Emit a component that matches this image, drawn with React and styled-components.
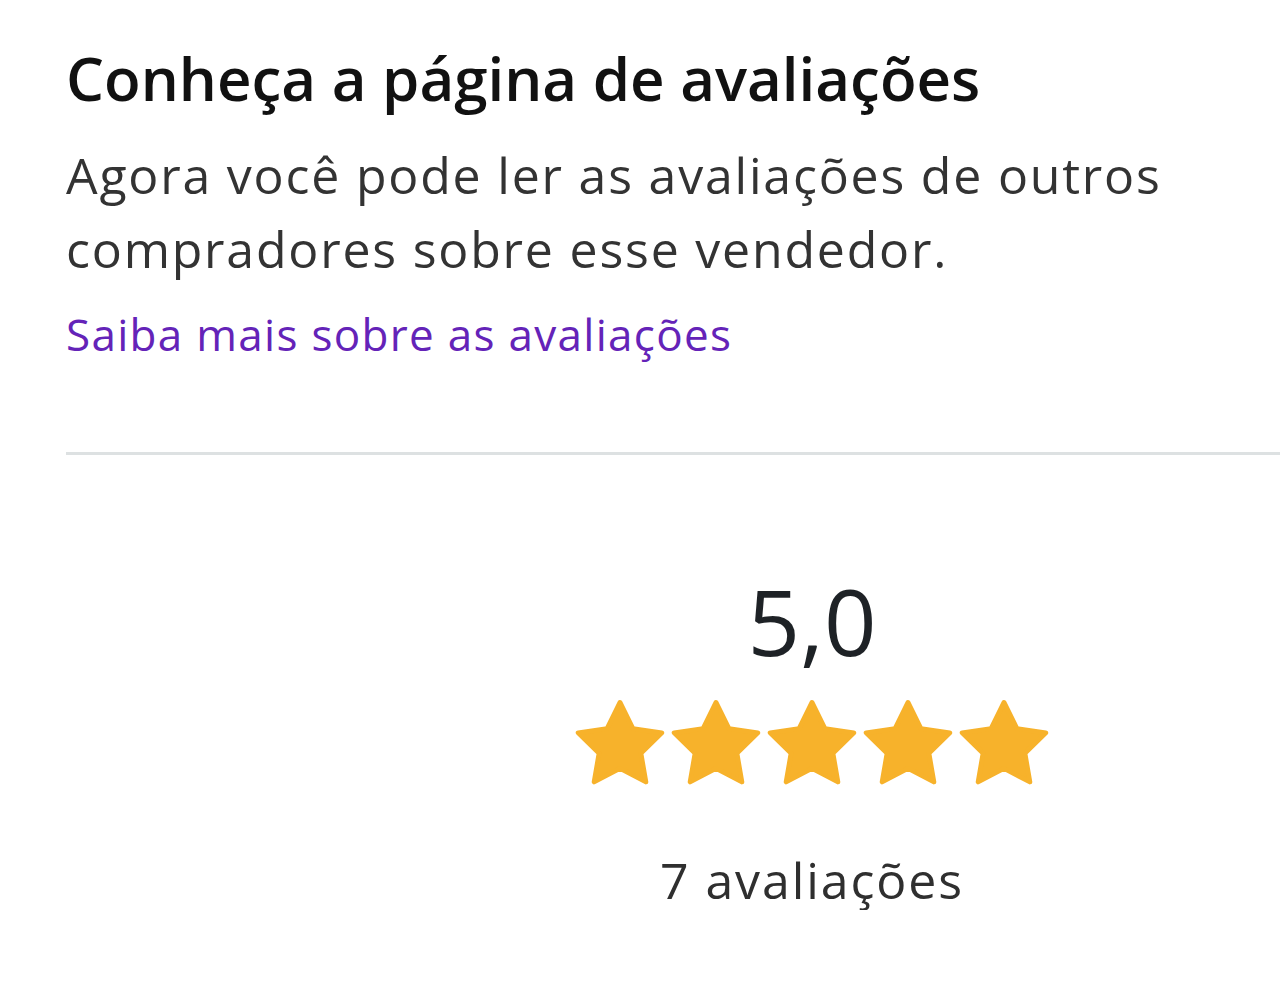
import styled, { createGlobalStyle } from "styled-components";

const GlobalStyle = createGlobalStyle`
  body {
    margin: 0;
    background: #ffffff;
    font-family: "Open Sans", "Lato", sans-serif;
  }
`;

const Page = styled.div`
  padding: 36px 0 0 66px;
`;

const Intro = styled.section`
  padding-right: 60px;
`;

const Title = styled.h1`
  margin: 0;
  font-size: 60px;
  font-weight: 600;
  line-height: 84px;
  color: #111111;
`;

const Text = styled.p`
  margin: 18px 0 0;
  font-size: 50px;
  line-height: 74px;
  letter-spacing: 1.8px;
  color: #333333;
`;

const Link = styled.a`
  display: inline-block;
  margin-top: 18px;
  font-size: 44px;
  line-height: 60px;
  letter-spacing: 1.3px;
  color: #6423b8;
  text-decoration: none;
`;

const Divider = styled.hr`
  margin: 88px 0 0;
  border: none;
  border-top: 3px solid #dde1e2;
`;

const Rating = styled.div`
  display: flex;
  flex-direction: column;
  align-items: center;
  width: 480px;
  margin: 116px 0 0 506px;
`;

const Score = styled.div`
  font-size: 92px;
  font-weight: 500;
  line-height: 100px;
  color: #1e2226;
`;

const Stars = styled.div`
  display: flex;
  margin-top: 25px;
`;

const Count = styled.div`
  margin-top: 58px;
  font-size: 50px;
  line-height: 60px;
  letter-spacing: 1.9px;
  color: #2f2f2f;
`;

function Star() {
  return (
    <svg width="96" height="96" viewBox="0 0 24 24">
      <path
        d="M12 1.6L15.23 8.15 22.46 9.2 17.23 14.3 18.47 21.5 12 18.1 5.53 21.5 6.77 14.3 1.54 9.2 8.77 8.15Z"
        fill="#f7b22b"
        stroke="#f7b22b"
        strokeWidth="1.2"
        strokeLinejoin="round"
      />
    </svg>
  );
}

export default function App() {
  return (
    <Page>
      <GlobalStyle />
      <Intro>
        <Title>Conheça a página de avaliações</Title>
        <Text>
          Agora você pode ler as avaliações de outros compradores sobre esse
          vendedor.
        </Text>
        <Link href="#">Saiba mais sobre as avaliações</Link>
      </Intro>
      <Divider />
      <Rating>
        <Score>5,0</Score>
        <Stars>
          {[0, 1, 2, 3, 4].map(i => (
            <Star key={i} />
          ))}
        </Stars>
        <Count>7 avaliações</Count>
      </Rating>
    </Page>
  );
}
